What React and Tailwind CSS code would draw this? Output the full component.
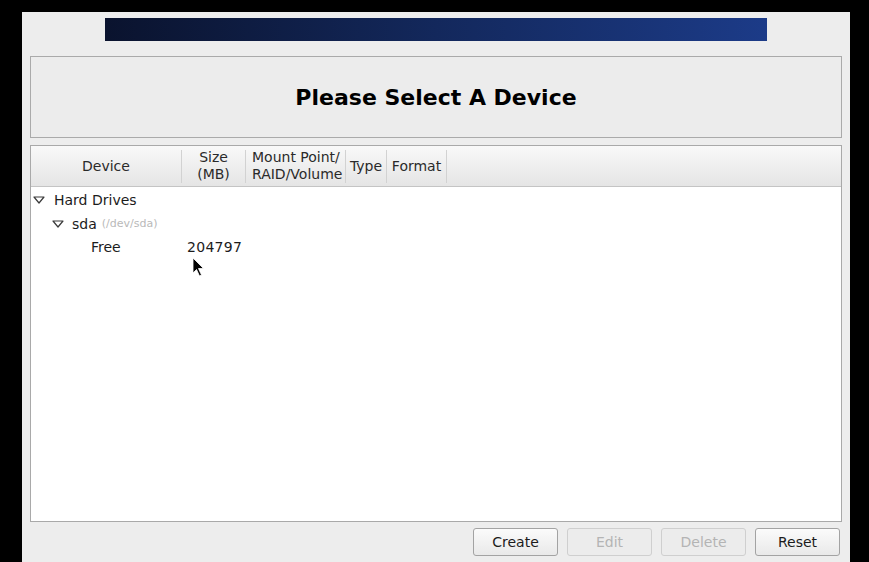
import React from 'react';

const font = { fontFamily: '"DejaVu Sans", "Liberation Sans", sans-serif' };

const Expander = () => (
  <svg width="12" height="8" viewBox="0 0 12 8" className="shrink-0">
    <polygon points="1,1 11,1 6,7" fill="none" stroke="#3a3a3a" strokeWidth="1.2" strokeLinejoin="round" />
  </svg>
);

const Divider = () => <div className="w-px h-[33px] self-center bg-[#d2d2d2] shrink-0" />;

const Button = ({ label, disabled }) => (
  <button
    type="button"
    className={`w-[85px] h-[28px] rounded-[3px] text-[14px] border ${
      disabled
        ? 'border-[#cfcfcf] bg-[#ececec] text-[#b4b4b4]'
        : 'border-[#a3a3a3] bg-gradient-to-b from-[#fbfbfb] to-[#e9e9e9] text-[#1c1c1c]'
    }`}
  >
    {label}
  </button>
);

export default function App() {
  return (
    <div className="relative w-full h-[562px] bg-black overflow-hidden text-[#1c1c1c]" style={font}>
      <div className="ml-[22px] mt-[12px] w-[828px] h-[550px] bg-[#ededed] flex flex-col">
        {/* banner */}
        <div className="ml-[83px] mt-[6px] w-[662px] h-[23px] bg-gradient-to-r from-[#0a132e] via-[#13285c] to-[#1c3b88]" />

        {/* title box */}
        <div className="ml-[8px] mt-[15px] w-[812px] h-[82px] border border-[#aaaaaa] bg-[#ececec] flex items-center justify-center">
          <span className="text-[22px] font-bold text-black">Please Select A Device</span>
        </div>

        {/* tree view */}
        <div className="ml-[8px] mt-[7px] w-[812px] h-[377px] border border-[#a9a9a9] bg-white flex flex-col">
          <div className="h-[41px] flex bg-gradient-to-b from-[#f9f9f9] to-[#e5e5e5] border-b border-[#c4c4c4] text-[14px] leading-[17px] text-[#2a2a2a]">
            <div className="w-[150px] flex items-center justify-center">Device</div>
            <Divider />
            <div className="w-[63px] flex flex-col items-center justify-center">
              <span>Size</span>
              <span>(MB)</span>
            </div>
            <Divider />
            <div className="w-[99px] flex flex-col justify-center pl-[6px]">
              <span>Mount Point/</span>
              <span>RAID/Volume</span>
            </div>
            <Divider />
            <div className="w-[40px] flex items-center justify-center">Type</div>
            <Divider />
            <div className="w-[59px] flex items-center justify-center">Format</div>
            <Divider />
          </div>

          <div className="flex flex-col text-[14px] pt-[1px]">
            <div className="h-[24px] flex items-center pl-[2px]">
              <Expander />
              <span className="ml-[9px]">Hard Drives</span>
            </div>
            <div className="h-[24px] flex items-center pl-[21px]">
              <Expander />
              <span className="ml-[8px]">sda</span>
              <span className="ml-[5px] text-[11px] text-[#b9b9b9]">(/dev/sda)</span>
            </div>
            <div className="h-[23px] flex items-center">
              <span className="w-[151px] pl-[60px]">Free</span>
              <span className="pl-[5px] tracking-[0.3px]">204797</span>
            </div>
          </div>
        </div>

        {/* buttons */}
        <div className="mt-[6px] mr-[10px] flex justify-end gap-[9px]">
          <Button label="Create" />
          <Button label="Edit" disabled />
          <Button label="Delete" disabled />
          <Button label="Reset" />
        </div>
      </div>

      {/* mouse pointer */}
      <svg className="absolute left-[192px] top-[257px]" width="13" height="20" viewBox="0 0 13 20">
        <path d="M1 1 L1 16 L4.5 12.5 L7.5 19 L9.5 18 L6.5 11.5 L11.5 11.5 Z" fill="#000" stroke="#fff" strokeWidth="0.8" />
      </svg>
    </div>
  );
}
